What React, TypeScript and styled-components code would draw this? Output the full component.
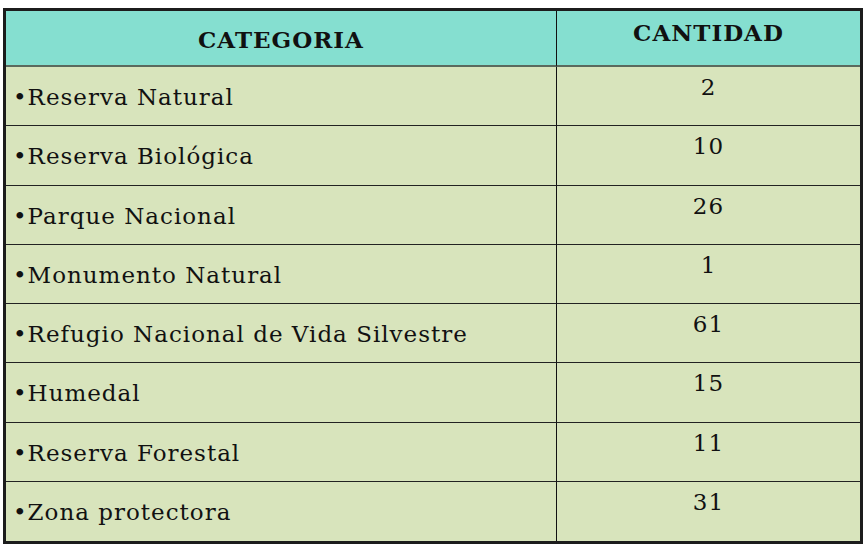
import React from 'react';
import styled, {createGlobalStyle} from "styled-components";

type Area = {
    name: string
    count: number
}

const areas: Area[] = [
    {name: "Reserva Natural", count: 2},
    {name: "Reserva Biológica", count: 10},
    {name: "Parque Nacional", count: 26},
    {name: "Monumento Natural", count: 1},
    {name: "Refugio Nacional de Vida Silvestre", count: 61},
    {name: "Humedal", count: 15},
    {name: "Reserva Forestal", count: 11},
    {name: "Zona protectora", count: 31},
]

const GlobalStyle = createGlobalStyle`
  body {
    margin: 0;
    background: #fff;
    font-family: "DejaVu Serif", "Liberation Serif", serif;
  }
`

export default function App() {
    return (
        <>
            <GlobalStyle/>
            <Page>
                <Table>
                    <HeadCell>CATEGORIA</HeadCell>
                    <HeadCell $raised>CANTIDAD</HeadCell>
                    {areas.map((a, i) => (
                        <React.Fragment key={a.name}>
                            <NameCell $last={i === areas.length - 1}>•{a.name}</NameCell>
                            <CountCell $last={i === areas.length - 1}>{a.count}</CountCell>
                        </React.Fragment>
                    ))}
                </Table>
            </Page>
        </>
    );
}

const Page = styled.div`
  padding: 8px 0 0 3px;
`

const Table = styled.div`
  box-sizing: border-box;
  width: 860px;
  height: 536px;
  border: 3px solid #1c1c1c;
  display: grid;
  grid-template-columns: 551px 1fr;
  grid-template-rows: 56px repeat(8, 1fr);
  color: #111;

  & > :nth-child(odd) {
    border-right: 1px solid #111;
  }
`

const HeadCell = styled.div<{ $raised?: boolean }>`
  background: #85dfd0;
  border-bottom: 2px solid #5b6a5e;
  display: flex;
  justify-content: center;
  align-items: ${p => p.$raised ? "flex-start" : "center"};
  padding-top: ${p => p.$raised ? "8px" : "2px"};
  font-weight: bold;
  font-size: 23px;
  letter-spacing: 1px;
`

const NameCell = styled.div<{ $last?: boolean }>`
  background: #d8e4bc;
  border-bottom: ${p => p.$last ? "none" : "1px solid #222"};
  display: flex;
  align-items: center;
  padding: 2px 0 0 7px;
  font-size: 23px;
  letter-spacing: 1px;
`

const CountCell = styled.div<{ $last?: boolean }>`
  background: #d8e4bc;
  border-bottom: ${p => p.$last ? "none" : "1px solid #222"};
  display: flex;
  justify-content: center;
  align-items: flex-start;
  padding-top: 7px;
  font-size: 23px;
  letter-spacing: 1px;
`
